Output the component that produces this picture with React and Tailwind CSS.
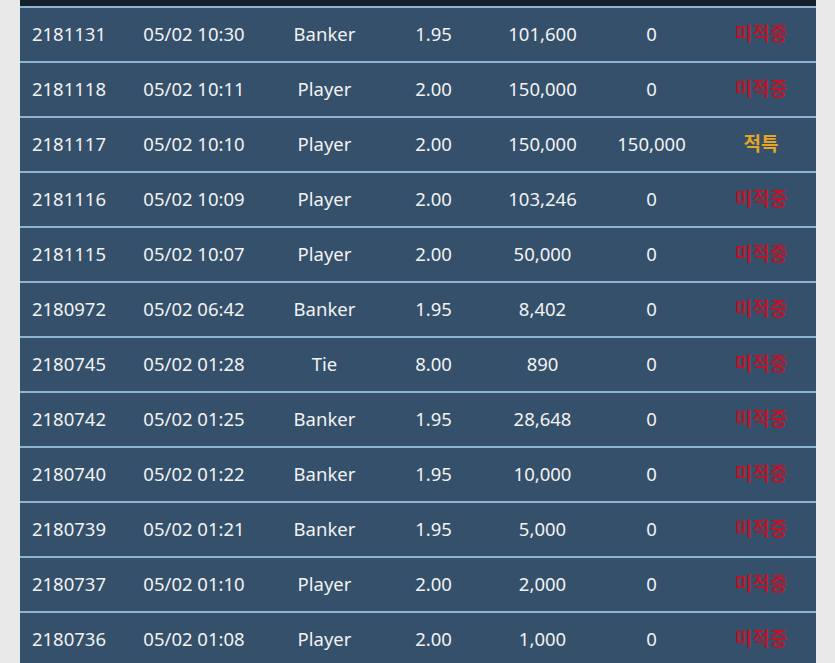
const ROWS = [
  ["2181131", "05/02 10:30", "Banker", "1.95", "101,600", "0", "미적중"],
  ["2181118", "05/02 10:11", "Player", "2.00", "150,000", "0", "미적중"],
  ["2181117", "05/02 10:10", "Player", "2.00", "150,000", "150,000", "적특"],
  ["2181116", "05/02 10:09", "Player", "2.00", "103,246", "0", "미적중"],
  ["2181115", "05/02 10:07", "Player", "2.00", "50,000", "0", "미적중"],
  ["2180972", "05/02 06:42", "Banker", "1.95", "8,402", "0", "미적중"],
  ["2180745", "05/02 01:28", "Tie", "8.00", "890", "0", "미적중"],
  ["2180742", "05/02 01:25", "Banker", "1.95", "28,648", "0", "미적중"],
  ["2180740", "05/02 01:22", "Banker", "1.95", "10,000", "0", "미적중"],
  ["2180739", "05/02 01:21", "Banker", "1.95", "5,000", "0", "미적중"],
  ["2180737", "05/02 01:10", "Player", "2.00", "2,000", "0", "미적중"],
  ["2180736", "05/02 01:08", "Player", "2.00", "1,000", "0", "미적중"],
];

export default function App() {
  return (
    <div className="h-[663px] overflow-hidden bg-[#e9e9e9] pl-5 pr-[19px]">
      <div className="bg-[#34506a] font-['Noto_Sans',sans-serif] text-[18.5px] text-[#f2f2f2]">
        <div className="h-[6px] bg-[#17212b]" />
        {ROWS.map((r) => (
          <div
            key={r[0]}
            className="grid h-[55px] grid-cols-[98px_152px_109px_109px_109px_109px_1fr] items-center border-t-2 border-[#8db5d3] pb-[2px] text-center"
          >
            <span>{r[0]}</span>
            <span>{r[1]}</span>
            <span>{r[2]}</span>
            <span>{r[3]}</span>
            <span>{r[4]}</span>
            <span>{r[5]}</span>
            <span
              className={`font-['Noto_Sans_CJK_KR',sans-serif] text-[19px] font-bold ${
                r[6] === "적특" ? "text-[#e3a526]" : "text-[#b8172b]"
              }`}
            >
              {r[6]}
            </span>
          </div>
        ))}
      </div>
    </div>
  );
}
